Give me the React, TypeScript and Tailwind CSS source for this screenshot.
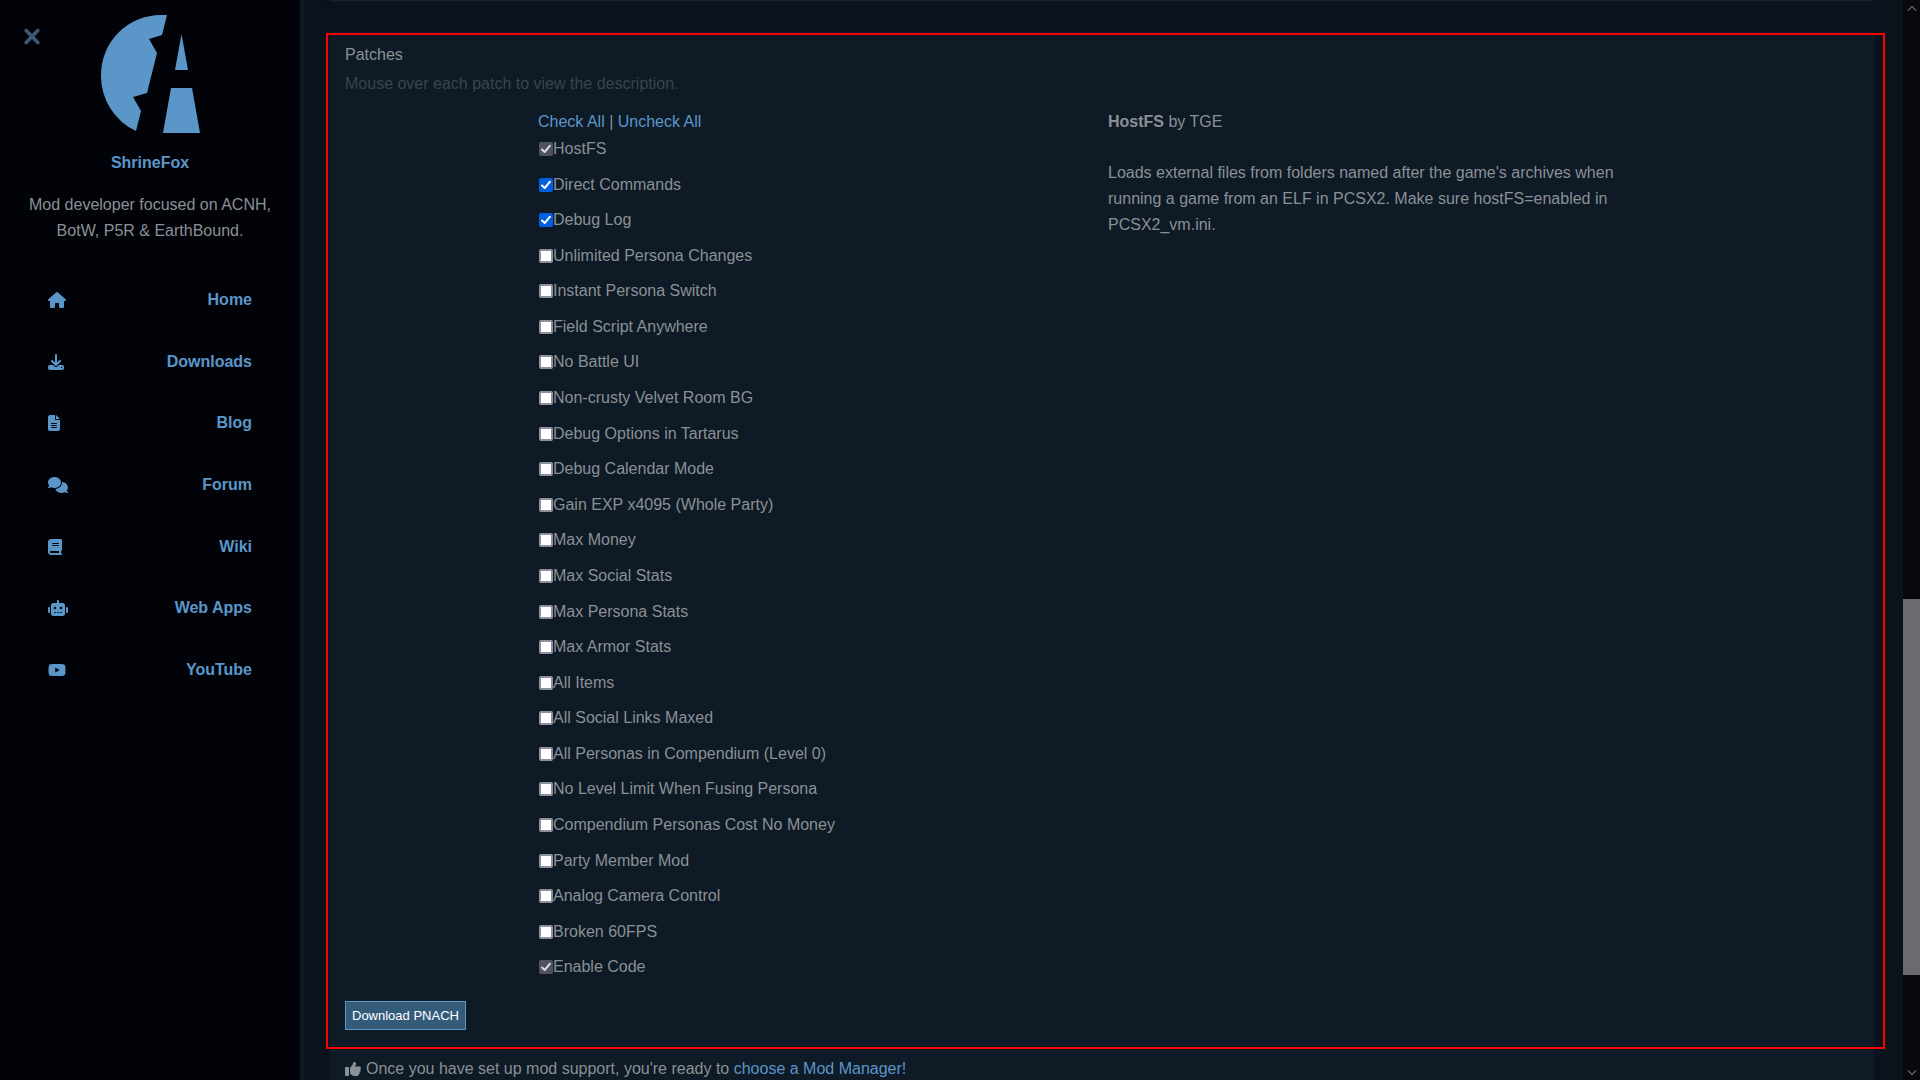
import { useState } from "react";
import type { IconType } from "react-icons";
import {
  FaBook,
  FaChevronDown,
  FaChevronUp,
  FaComments,
  FaDownload,
  FaFileLines,
  FaHouse,
  FaRobot,
  FaThumbsUp,
  FaYoutube,
} from "react-icons/fa6";

const navItems: { label: string; icon: IconType; size: string }[] = [
  { label: "Home", icon: FaHouse, size: "h-4 w-[18px]" },
  { label: "Downloads", icon: FaDownload, size: "h-4 w-4" },
  { label: "Blog", icon: FaFileLines, size: "h-4 w-3" },
  { label: "Forum", icon: FaComments, size: "h-4 w-5" },
  { label: "Wiki", icon: FaBook, size: "h-4 w-[14px]" },
  { label: "Web Apps", icon: FaRobot, size: "h-4 w-5" },
  { label: "YouTube", icon: FaYoutube, size: "h-4 w-[18px]" },
];

type Patch = { name: string; on?: boolean; locked?: boolean };

const patches: Patch[] = [
  { name: "HostFS", on: true, locked: true },
  { name: "Direct Commands", on: true },
  { name: "Debug Log", on: true },
  { name: "Unlimited Persona Changes" },
  { name: "Instant Persona Switch" },
  { name: "Field Script Anywhere" },
  { name: "No Battle UI" },
  { name: "Non-crusty Velvet Room BG" },
  { name: "Debug Options in Tartarus" },
  { name: "Debug Calendar Mode" },
  { name: "Gain EXP x4095 (Whole Party)" },
  { name: "Max Money" },
  { name: "Max Social Stats" },
  { name: "Max Persona Stats" },
  { name: "Max Armor Stats" },
  { name: "All Items" },
  { name: "All Social Links Maxed" },
  { name: "All Personas in Compendium (Level 0)" },
  { name: "No Level Limit When Fusing Persona" },
  { name: "Compendium Personas Cost No Money" },
  { name: "Party Member Mod" },
  { name: "Analog Camera Control" },
  { name: "Broken 60FPS" },
  { name: "Enable Code", on: true, locked: true },
];

function Logo() {
  return (
    <svg viewBox="0 0 99 119" className="h-[119px] w-[99px] fill-[#5b96c9]" aria-hidden="true">
      <path d="M66 0 L61 20 L48 24 L56 38 L46 78 L32 82 L40 96 L35 116 A61 61 0 0 1 0 60 A60 60 0 0 1 60 0Z" />
      <path d="M80.500 19 L87 55 H74Z" />
      <path d="M70 73 H91 L99 118 H62Z" />
    </svg>
  );
}

function Sidebar() {
  return (
    <aside className="relative w-[300px] shrink-0 bg-[#010308] text-center">
      <button type="button" aria-label="Close menu" className="absolute top-7 left-6 text-[#3a5a78]">
        <svg viewBox="0 0 16 17" className="h-[17px] w-4 fill-none stroke-current" aria-hidden="true">
          <path d="M2.200 2.500 L13.800 14.500 M13.800 2.500 L2.200 14.500" strokeWidth="3.600" strokeLinecap="round" />
        </svg>
      </button>
      <div className="flex flex-col items-center px-5 pt-[15px]">
        <Logo />
        <a href="#home" className="mt-4 leading-[26px] font-bold text-[#5b96c9]">ShrineFox</a>
        <p className="mt-4 leading-[26px]">
          Mod developer focused on ACNH, BotW, P5R &amp; EarthBound.
        </p>
      </div>
      <nav className="mt-[25px] grid min-h-[432px] auto-rows-fr px-12">
        {navItems.map(({ label, icon: Icon, size }) => (
          <a key={label} href="#menu" className="flex items-center justify-between font-bold text-[#5b96c9]">
            <Icon className={size} />
            {label}
          </a>
        ))}
      </nav>
    </aside>
  );
}

function PatchList() {
  const [checked, setChecked] = useState(patches.map((p) => !!p.on));
  const setAll = (value: boolean) => setChecked(patches.map((p) => (p.locked ? true : value)));
  return (
    <div>
      <div className="pb-px leading-[26px]">
        <button type="button" className="text-[#5b96c9]" onClick={() => setAll(true)}>Check All</button>
        {" | "}
        <button type="button" className="text-[#5b96c9]" onClick={() => setAll(false)}>Uncheck All</button>
      </div>
      <div className="grid min-h-[854px] auto-rows-fr">
        {patches.map((p, i) => (
          <label key={p.name} className="flex items-start leading-[26px]">
            <input
              type="checkbox"
              checked={checked[i]}
              disabled={p.locked}
              onChange={() => setChecked(checked.map((c, j) => (j === i ? !c : c)))}
              className="peer sr-only"
            />
            <span
              className="mt-[6px] ml-px flex size-[14px] shrink-0 items-center justify-center rounded-[2px] border-2 border-[#8f8f9d] bg-white text-transparent peer-checked:border-[#0060df] peer-checked:bg-[#0060df] peer-checked:text-white peer-disabled:border-[#50535f] peer-disabled:bg-[#50535f] peer-disabled:text-[#dcdcdf]"
              aria-hidden="true"
            >
              <svg viewBox="0 0 12 12" className="size-3 shrink-0 fill-none stroke-current stroke-2">
                <path d="M2 6.500 L4.700 9 L10 2.700" strokeLinecap="round" strokeLinejoin="round" />
              </svg>
            </span>
            <span>{p.name}</span>
          </label>
        ))}
      </div>
    </div>
  );
}

function Scrollbar() {
  return (
    <div className="flex w-[17px] shrink-0 flex-col bg-[#08090d]" aria-hidden="true">
      <div className="flex h-[17px] items-center justify-center text-[#5f6064]">
        <FaChevronUp size={10} />
      </div>
      <div className="grow-[582]" />
      <div className="grow-[376] bg-[#6a6b6f]" />
      <div className="grow-[88]" />
      <div className="flex h-[17px] items-center justify-center text-[#5f6064]">
        <FaChevronDown size={10} />
      </div>
    </div>
  );
}

export default function App() {
  return (
    <div className="flex h-screen overflow-hidden bg-[#0a121b] font-['Liberation_Sans',Arial,sans-serif] text-base text-[#8b9096]">
      <Sidebar />
      <main className="min-w-0 grow overflow-hidden border-l-4 border-[#0c1921] pr-[30px] pl-[26px]">
        <div className="h-px bg-[#132530] shadow-[0_0_4px_#1a3546]" />
        <section className="relative mt-8 bg-[#0e1a25] px-[15px] pt-[9px] shadow-[0_0_3px_#132735]">
          <div className="pointer-events-none absolute top-0 -right-3 bottom-[33px] -left-1 border-2 border-[#ff0000]" />
          <h2 className="leading-[26px]">Patches</h2>
          <p className="mt-[3px] leading-[26px] text-[#3a444c]">Mouse over each patch to view the description.</p>
          <div className="mt-3 grid grid-cols-[193fr_570fr_540fr_210fr]">
            <div className="col-start-2">
              <PatchList />
            </div>
            <div className="leading-[26px]">
              <p><b>HostFS</b> by TGE</p>
              <p className="mt-[25px]">
                Loads external files from folders named after the game's archives when running a game
                from an ELF in PCSX2. Make sure hostFS=enabled in PCSX2_vm.ini.
              </p>
            </div>
          </div>
          <button type="button" className="mt-[11px] block h-[29px] border border-[#5b96c9] bg-[#355b7b] px-1.5 text-[13px] text-white">
            Download PNACH
          </button>
          <p className="mt-[26px] flex items-center gap-[5px] leading-[26px]">
            <FaThumbsUp size={16} />
            <span>
              Once you have set up mod support, you're ready to{" "}
              <a href="#manager" className="text-[#5b96c9]">choose a Mod Manager!</a>
            </span>
          </p>
        </section>
      </main>
      <Scrollbar />
    </div>
  );
}
